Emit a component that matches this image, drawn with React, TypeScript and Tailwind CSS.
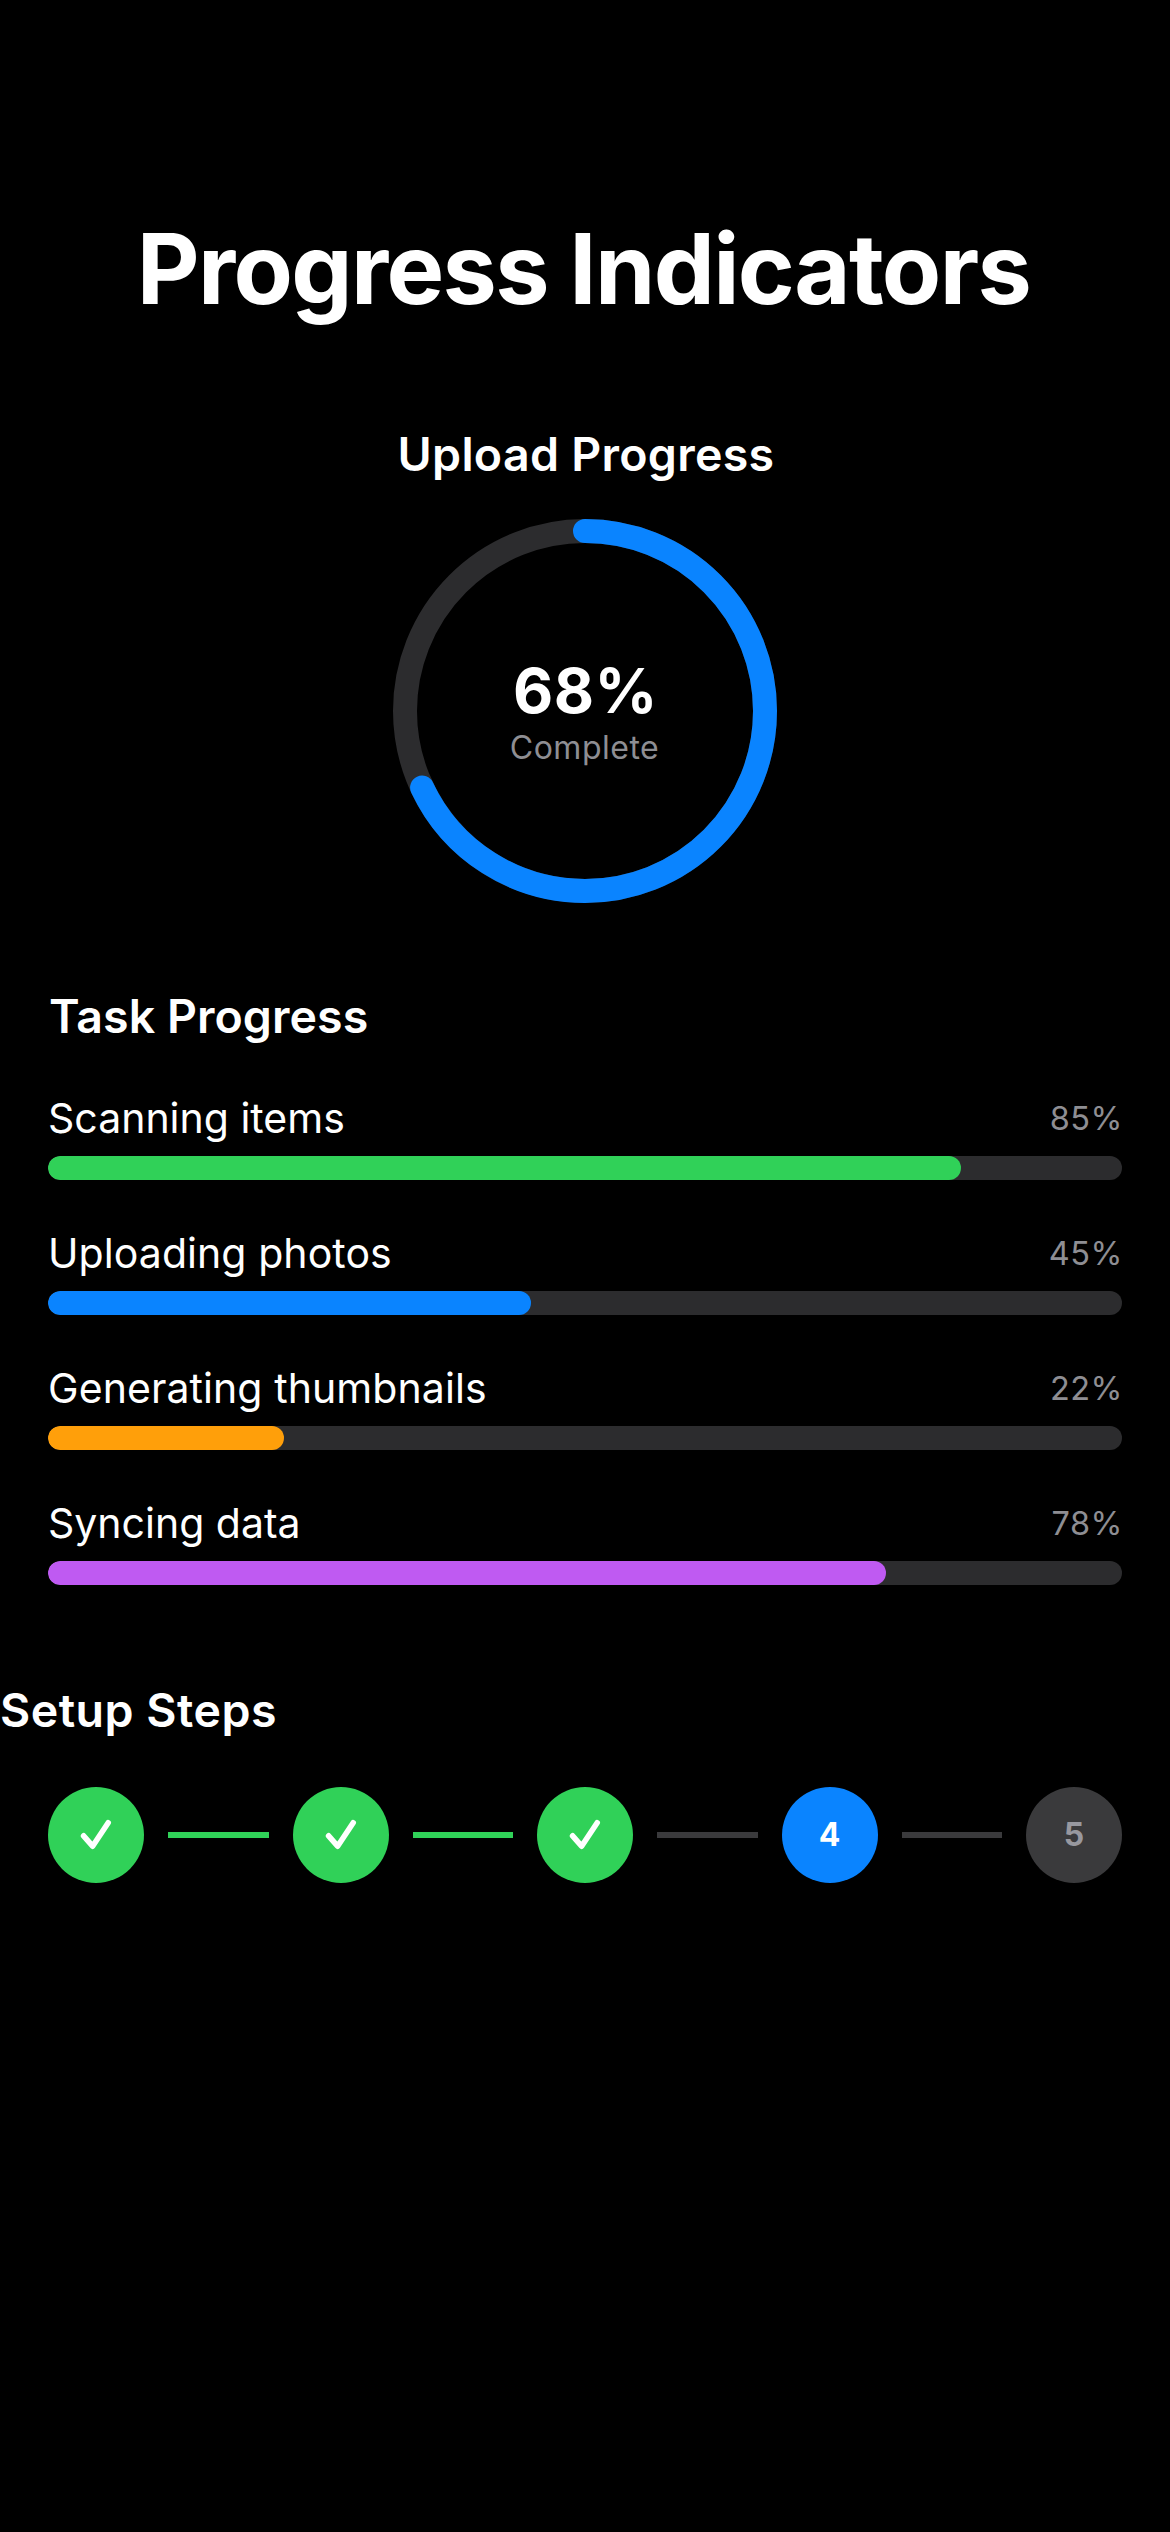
const tasks = [
  { label: 'Scanning items', percent: 85, color: 'bg-[#30d158]', tracking: '' },
  { label: 'Uploading photos', percent: 45, color: 'bg-[#0a84ff]', tracking: 'tracking-[0.07px]' },
  { label: 'Generating thumbnails', percent: 22, color: 'bg-[#ff9f0a]', tracking: 'tracking-[0.08px]' },
  { label: 'Syncing data', percent: 78, color: 'bg-[#bf5af2]', tracking: '' },
];

const STEP_COUNT = 5;
const CURRENT_STEP = 4;

function ProgressRing({ percent }: { percent: number }) {
  return (
    <div className="relative mt-[37px] flex size-96 flex-col items-center justify-center">
      <svg className="absolute inset-0 size-96 -rotate-90" viewBox="0 0 384 384" fill="none" strokeWidth={24}>
        <circle cx={192} cy={192} r={180} stroke="#2c2c2e" />
        <circle
          cx={192}
          cy={192}
          r={180}
          stroke="#0a84ff"
          strokeLinecap="round"
          pathLength={100}
          strokeDasharray={`${percent} 100`}
        />
      </svg>
      <span className="relative -mr-px text-[62px] leading-[71px] font-bold tracking-[0.5px]">{percent}%</span>
      <span className="relative mr-px pt-0.5 text-[32px] leading-10 tracking-[0.5px] text-[#8e8e93]">Complete</span>
    </div>
  );
}

function TaskRow({ label, percent, color, tracking }: (typeof tasks)[number]) {
  return (
    <div>
      <div className="flex h-12 items-center justify-between">
        <span className={`text-[41px] leading-[48px] ${tracking}`}>{label}</span>
        <span className="-mr-px pt-0.5 text-[32.5px] leading-[48px] tracking-[0.5px] text-[#8e8e93]">{percent}%</span>
      </div>
      <div className="mt-[14px] h-6 overflow-hidden rounded-full bg-[#2c2c2e]">
        <div className={`h-full rounded-full ${color}`} style={{ width: `${percent}%` }} />
      </div>
    </div>
  );
}

function Step({ number }: { number: number }) {
  if (number < CURRENT_STEP) {
    return (
      <div className="size-24 shrink-0 rounded-full bg-[#30d158]">
        <svg className="size-24" viewBox="0 0 96 96" fill="none">
          <path
            d="M35.6 48.8 44.6 59.2 60.2 35.8"
            stroke="white"
            strokeWidth={5.6}
            strokeLinecap="round"
            strokeLinejoin="round"
          />
        </svg>
      </div>
    );
  }
  const state = number === CURRENT_STEP ? 'bg-[#0a84ff] text-white' : 'bg-[#3a3a3c] text-[#98989f]';
  return (
    <div className={`flex size-24 shrink-0 items-center justify-center rounded-full text-[32px] leading-10 font-bold ${state}`}>
      {number}
    </div>
  );
}

function Stepper() {
  return (
    <div className="mt-[49px] flex items-center gap-6 px-12">
      {Array.from({ length: STEP_COUNT }, (_, i) => i + 1).flatMap((n) => {
        const step = <Step key={`step-${n}`} number={n} />;
        if (n === STEP_COUNT) return [step];
        const line = n < CURRENT_STEP - 1 ? 'bg-[#30d158]' : 'bg-[#3a3a3c]';
        return [step, <div key={`line-${n}`} className={`h-1.5 flex-1 ${line}`} />];
      })}
    </div>
  );
}

export default function App() {
  return (
    <main className="flex h-[2532px] w-[1170px] flex-col overflow-hidden bg-black pt-[209px] font-['Inter',sans-serif] text-white">
      <h1 className="pr-[3px] text-center text-[97px] leading-[120px] font-bold tracking-[-1.63px]">
        Progress Indicators
      </h1>
      <section className="mt-[97px] flex flex-col items-center">
        <h2 className="pl-0.5 text-[46.5px] leading-[56px] font-semibold tracking-[0.29px]">Upload Progress</h2>
        <ProgressRing percent={68} />
      </section>
      <section className="mt-[85px] px-12">
        <h2 className="pl-px text-[46.5px] leading-[56px] font-semibold tracking-[0.05px]">Task Progress</h2>
        <div className="mt-[50px] flex flex-col gap-[49px]">
          {tasks.map((task) => (
            <TaskRow key={task.label} {...task} />
          ))}
        </div>
      </section>
      <section className="mt-[97px]">
        <h2 className="text-[46.5px] leading-[56px] font-semibold tracking-[0.49px]">Setup Steps</h2>
        <Stepper />
      </section>
    </main>
  );
}
